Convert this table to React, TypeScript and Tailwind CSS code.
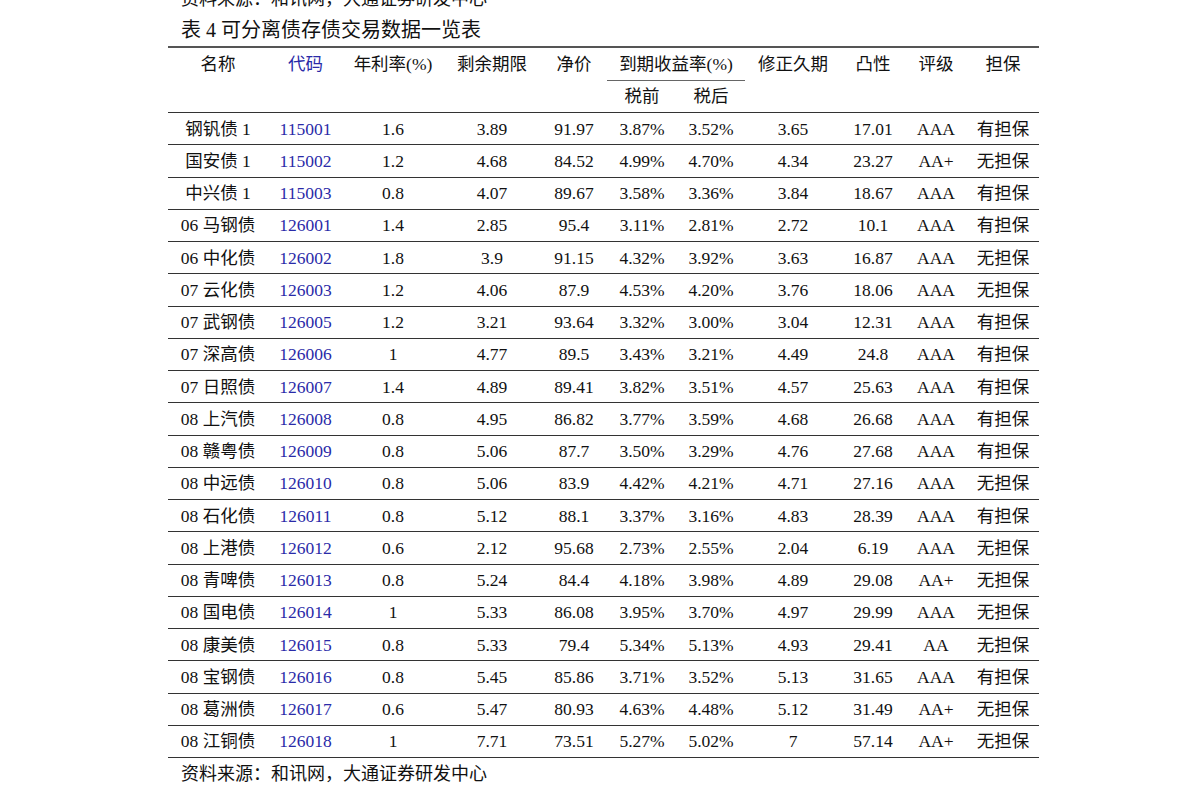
import React from 'react'

type Row = [string, string, string, string, string, string, string, string, string, string, string]

const ROWS: Row[] = [
  ['钢钒债 1', '115001', '1.6', '3.89', '91.97', '3.87%', '3.52%', '3.65', '17.01', 'AAA', '有担保'],
  ['国安债 1', '115002', '1.2', '4.68', '84.52', '4.99%', '4.70%', '4.34', '23.27', 'AA+', '无担保'],
  ['中兴债 1', '115003', '0.8', '4.07', '89.67', '3.58%', '3.36%', '3.84', '18.67', 'AAA', '有担保'],
  ['06 马钢债', '126001', '1.4', '2.85', '95.4', '3.11%', '2.81%', '2.72', '10.1', 'AAA', '有担保'],
  ['06 中化债', '126002', '1.8', '3.9', '91.15', '4.32%', '3.92%', '3.63', '16.87', 'AAA', '无担保'],
  ['07 云化债', '126003', '1.2', '4.06', '87.9', '4.53%', '4.20%', '3.76', '18.06', 'AAA', '无担保'],
  ['07 武钢债', '126005', '1.2', '3.21', '93.64', '3.32%', '3.00%', '3.04', '12.31', 'AAA', '有担保'],
  ['07 深高债', '126006', '1', '4.77', '89.5', '3.43%', '3.21%', '4.49', '24.8', 'AAA', '有担保'],
  ['07 日照债', '126007', '1.4', '4.89', '89.41', '3.82%', '3.51%', '4.57', '25.63', 'AAA', '有担保'],
  ['08 上汽债', '126008', '0.8', '4.95', '86.82', '3.77%', '3.59%', '4.68', '26.68', 'AAA', '有担保'],
  ['08 赣粤债', '126009', '0.8', '5.06', '87.7', '3.50%', '3.29%', '4.76', '27.68', 'AAA', '有担保'],
  ['08 中远债', '126010', '0.8', '5.06', '83.9', '4.42%', '4.21%', '4.71', '27.16', 'AAA', '无担保'],
  ['08 石化债', '126011', '0.8', '5.12', '88.1', '3.37%', '3.16%', '4.83', '28.39', 'AAA', '有担保'],
  ['08 上港债', '126012', '0.6', '2.12', '95.68', '2.73%', '2.55%', '2.04', '6.19', 'AAA', '无担保'],
  ['08 青啤债', '126013', '0.8', '5.24', '84.4', '4.18%', '3.98%', '4.89', '29.08', 'AA+', '无担保'],
  ['08 国电债', '126014', '1', '5.33', '86.08', '3.95%', '3.70%', '4.97', '29.99', 'AAA', '无担保'],
  ['08 康美债', '126015', '0.8', '5.33', '79.4', '5.34%', '5.13%', '4.93', '29.41', 'AA', '无担保'],
  ['08 宝钢债', '126016', '0.8', '5.45', '85.86', '3.71%', '3.52%', '5.13', '31.65', 'AAA', '有担保'],
  ['08 葛洲债', '126017', '0.6', '5.47', '80.93', '4.63%', '4.48%', '5.12', '31.49', 'AA+', '无担保'],
  ['08 江铜债', '126018', '1', '7.71', '73.51', '5.27%', '5.02%', '7', '57.14', 'AA+', '无担保'],
]

const GRID = 'grid grid-cols-[100px_75px_100px_98px_66px_70px_68px_96px_64px_62px_72px]'
const FONT = { fontFamily: '"Liberation Serif", "Noto Sans CJK SC", serif' }

export default function App() {
  return (
    <div className="min-h-[800px] bg-white text-[#111] overflow-hidden" style={FONT}>
      <div className="ml-[168px] w-[871px]">
        <div className="-mt-[10px] pl-[13px] text-[18px] leading-[18px]">资料来源：和讯网，大通证券研发中心</div>
        <div className="mt-[6px] pl-[13px] text-[20px] leading-[32px]">表 4 可分离债存债交易数据一览表</div>

        <div className="border-t-2 border-[#555]">
          <div className={`${GRID} text-[17.5px] leading-[32px]`}>
            <div className="text-center">名称</div>
            <div className="text-center text-[#2a2aa8]">代码</div>
            <div className="text-center">年利率(%)</div>
            <div className="text-center">剩余期限</div>
            <div className="text-center">净价</div>
            <div className="col-span-2 text-center border-b-[1.5px] border-[#666]">到期收益率(%)</div>
            <div className="text-center">修正久期</div>
            <div className="text-center">凸性</div>
            <div className="text-center">评级</div>
            <div className="text-center">担保</div>
          </div>
          <div className={`${GRID} text-[17.5px] leading-[31px] border-b-[1.5px] border-[#333]`}>
            <div className="col-span-5" />
            <div className="text-center">税前</div>
            <div className="text-center">税后</div>
            <div className="col-span-4" />
          </div>

          {ROWS.map((r) => (
            <div
              key={r[1]}
              className={`${GRID} h-[32.25px] items-center text-[17.5px] border-b-[1.5px] border-[#333]`}
            >
              {r.map((c, i) => (
                <div key={i} className={`text-center ${i === 1 ? 'text-[#2a2aa8]' : ''}`}>
                  {c}
                </div>
              ))}
            </div>
          ))}
        </div>

        <div className="pl-[13px] pt-[5px] text-[18px] leading-[22px]">资料来源：和讯网，大通证券研发中心</div>
      </div>
    </div>
  )
}
